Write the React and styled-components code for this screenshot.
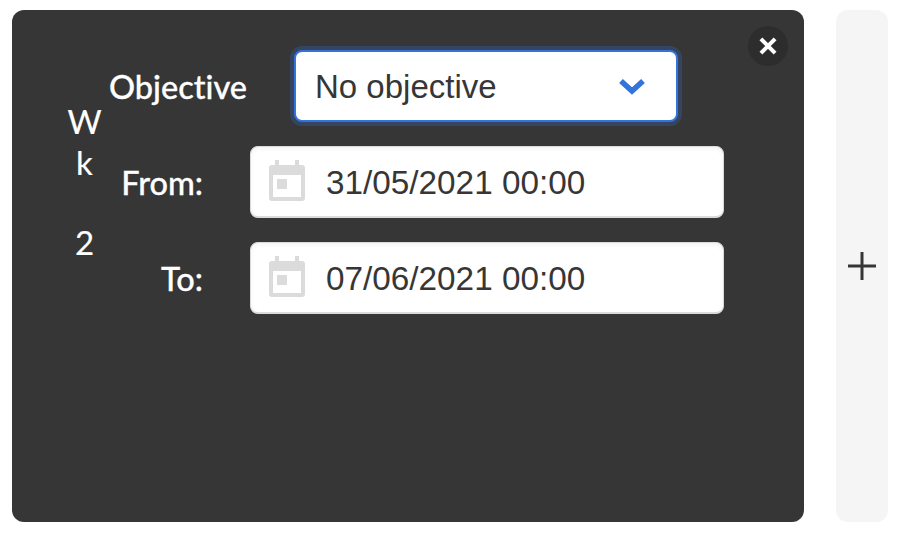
import React from 'react';
import styled, { createGlobalStyle } from 'styled-components';

const GlobalStyle = createGlobalStyle`
    html, body {
        margin: 0;
        padding: 0;
        background: #fff;
    }
    * {
        box-sizing: border-box;
    }
`;

const Page = styled.div`
    display: flex;
    gap: 32px;
    width: 904px;
    height: 538px;
    padding: 10px 16px 16px 12px;
`;

const WeekPanel = styled.section`
    position: relative;
    display: flex;
    width: 792px;
    background: #363636;
    border-radius: 12px;
    padding: 36px 0 0 58px;
`;

const WeekLabel = styled.div`
    display: flex;
    flex-direction: column;
    align-items: center;
    width: 29px;
    margin-top: 55px;
    font-family: Lato, sans-serif;
    font-size: 33px;
    line-height: 40px;
    color: #fff;
    -webkit-text-stroke: 0.2px #fff;
`;

const WeekLetter = styled.span`
    display: block;
    height: ${(p) => p.$height}px;
`;

const Form = styled.div`
    display: flex;
    flex-direction: column;
`;

const Row = styled.div`
    display: flex;
    align-items: center;
    height: 72px;
    margin-bottom: 24px;
`;

const ObjectiveRow = styled(Row)`
    margin-top: 4px;
    margin-left: 10px;
`;

const Label = styled.label`
    width: ${(p) => p.$width}px;
    margin-right: ${(p) => p.$gap}px;
    text-align: right;
    font-family: Lato, sans-serif;
    font-size: 32.5px;
    font-weight: 500;
    font-variant-ligatures: none;
    color: #fff;
    white-space: nowrap;
    -webkit-text-stroke: 0.3px #fff;
`;

const Select = styled.div`
    display: flex;
    align-items: center;
    justify-content: space-between;
    width: 384px;
    height: 72px;
    padding: 0 30px 0 19px;
    background: #fff;
    border: 2px solid #3273dc;
    border-radius: 8px;
    box-shadow: 0 0 0 4px rgba(50, 115, 220, 0.25);
    font-family: "Liberation Sans", Arial, sans-serif;
    font-size: 33px;
    color: #363636;
`;

const SelectValue = styled.span`
    padding-top: 2px;
`;

const DateField = styled.div`
    display: flex;
    align-items: center;
    width: 474px;
    height: 72px;
    padding-left: 18px;
    background: #fff;
    border: 2px solid #dbdbdb;
    border-width: 1px 1px 2px 1px;
    border-radius: 8px;
    box-shadow: inset 0 2px 4px rgba(10, 10, 10, 0.05);
    font-family: "Liberation Sans", Arial, sans-serif;
    font-size: 33.3px;
    color: #363636;

    svg {
        margin-top: -2px;
    }
`;

const DateValue = styled.span`
    margin-left: 21px;
    padding-top: 3px;
`;

const CloseButton = styled.button`
    position: absolute;
    top: 16px;
    right: 16px;
    width: 40px;
    height: 40px;
    padding: 0;
    border: none;
    border-radius: 50%;
    background: rgba(10, 10, 10, 0.2);

    &::before,
    &::after {
        content: '';
        position: absolute;
        top: 50%;
        left: 50%;
        background: #fff;
        transform: translate(-50%, -50%) rotate(45deg);
    }
    &::before {
        width: 20px;
        height: 4px;
    }
    &::after {
        width: 4px;
        height: 20px;
    }
`;

const AddColumn = styled.button`
    display: flex;
    align-items: center;
    justify-content: center;
    width: 52px;
    padding: 0;
    border: none;
    border-radius: 12px;
    background: #f5f5f5;
`;

const Chevron = () => (
    <svg width="28" height="18" viewBox="0 0 28 18">
        <path d="M3 4 L14 14 L25 4" fill="none" stroke="#3273dc" strokeWidth="5.5" />
    </svg>
);

const CalendarIcon = () => (
    <svg width="36" height="41" viewBox="0 0 36 41">
        <path
            fillRule="evenodd"
            fill="#dbdbdb"
            d="M6 0h4v5h16v-5h4v5h3a3 3 0 0 1 3 3v30a3 3 0 0 1-3 3h-30a3 3 0 0 1-3-3v-30a3 3 0 0 1 3-3h3z M4 15v22h28v-22z"
        />
        <path fill="#dbdbdb" d="M8 19h10v10h-10z" />
    </svg>
);

const PlusIcon = () => (
    <svg width="30" height="30" viewBox="0 0 30 30">
        <path d="M15 1v28M1 15h28" fill="none" stroke="#363636" strokeWidth="3" />
    </svg>
);

const App = () => {
    return (
        <>
            <GlobalStyle />
            <Page>
                <WeekPanel>
                    <WeekLabel>
                        <WeekLetter $height={41}>W</WeekLetter>
                        <WeekLetter $height={80}>k</WeekLetter>
                        <WeekLetter $height={40}>2</WeekLetter>
                    </WeekLabel>
                    <Form>
                        <ObjectiveRow>
                            <Label $width={137} $gap={48}>Objective</Label>
                            <Select>
                                <SelectValue>No objective</SelectValue>
                                <Chevron />
                            </Select>
                        </ObjectiveRow>
                        <Row>
                            <Label $width={104} $gap={47}>From:</Label>
                            <DateField>
                                <CalendarIcon />
                                <DateValue>31/05/2021 00:00</DateValue>
                            </DateField>
                        </Row>
                        <Row>
                            <Label $width={104} $gap={47}>To:</Label>
                            <DateField>
                                <CalendarIcon />
                                <DateValue>07/06/2021 00:00</DateValue>
                            </DateField>
                        </Row>
                    </Form>
                    <CloseButton aria-label="Close" />
                </WeekPanel>
                <AddColumn aria-label="Add">
                    <PlusIcon />
                </AddColumn>
            </Page>
        </>
    );
};

export default App;
